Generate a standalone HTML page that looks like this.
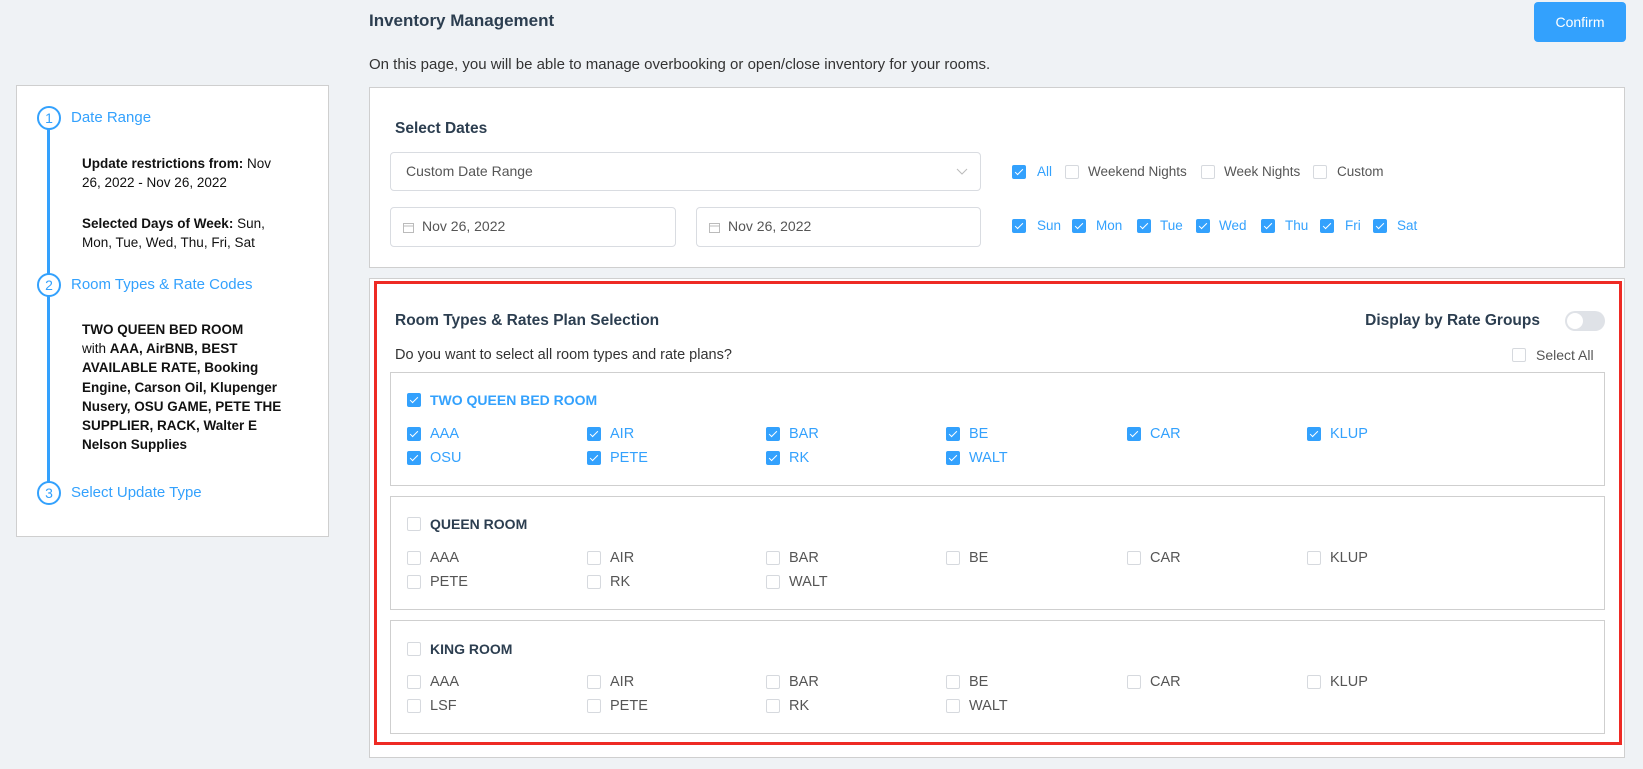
<!DOCTYPE html>
<html><head><meta charset="utf-8"><style>
*{margin:0;padding:0;box-sizing:border-box}
body{width:1643px;height:769px;background:#eff2f5;font-family:"Liberation Sans",sans-serif;position:relative;overflow:hidden;color:#333}
.a{position:absolute;white-space:nowrap;line-height:18px}
.box{position:absolute;background:#fff;border:1px solid #cfcfcf}
.cb{position:absolute;width:14px;height:14px;border:1px solid #d6d9de;border-radius:2px;background:#fff}
.cb.on{background:#33a1fd;border-color:#33a1fd}
.cb.on::after{content:"";position:absolute;left:4px;top:1px;width:3px;height:7px;border:solid #fff;border-width:0 1.5px 1.5px 0;transform:rotate(45deg)}
.bl{color:#33a1fd}
.gr{color:#555}
.inp{position:absolute;border:1px solid #d9dce1;border-radius:4px;background:#fff;font-size:14px;color:#555}
.circ{position:absolute;width:24px;height:24px;border:2px solid #33a1fd;border-radius:50%;background:#fff;color:#33a1fd;font-size:14px;text-align:center;line-height:20px}
.lp{font-size:13.5px;color:#111;line-height:19.2px}
</style></head><body>

<div class="a" style="left:369px;top:11px;font-size:17px;font-weight:bold;color:#2c3e50;line-height:20px">Inventory Management</div>
<div style="position:absolute;left:1534px;top:2px;width:92px;height:40px;background:#33a1fd;border-radius:4px;color:#fff;font-size:14px;text-align:center;line-height:40px">Confirm</div>
<div class="a" style="left:369px;top:56px;font-size:15px;color:#333">On this page, you will be able to manage overbooking or open/close inventory for your rooms.</div>

<div class="box" style="left:16px;top:85px;width:313px;height:452px"></div>
<div style="position:absolute;left:47px;top:118px;width:3px;height:375px;background:#33a1fd"></div>
<div class="circ" style="left:37px;top:106px">1</div>
<div class="circ" style="left:37px;top:273px">2</div>
<div class="circ" style="left:37px;top:481px">3</div>
<div class="a bl" style="left:71px;top:109px;font-size:15px">Date Range</div>
<div class="a bl" style="left:71px;top:276px;font-size:15px">Room Types &amp; Rate Codes</div>
<div class="a bl" style="left:71px;top:484px;font-size:15px">Select Update Type</div>
<div class="a lp" style="left:82px;top:154px;white-space:normal;width:205px"><b>Update restrictions from:</b> Nov 26, 2022 - Nov 26, 2022</div>
<div class="a lp" style="left:82px;top:214px;white-space:normal;width:205px"><b>Selected Days of Week:</b> Sun, Mon, Tue, Wed, Thu, Fri, Sat</div>
<div class="a lp" style="left:82px;top:320px;white-space:normal;width:206px"><b>TWO QUEEN BED ROOM</b><br>with <b>AAA, AirBNB, BEST AVAILABLE RATE, Booking Engine, Carson Oil, Klupenger Nusery, OSU GAME, PETE THE SUPPLIER, RACK, Walter E Nelson Supplies</b></div>

<div class="box" style="left:369px;top:87px;width:1256px;height:181px"></div>
<div class="a" style="left:395px;top:120px;font-size:15.5px;font-weight:bold;color:#2c3e50">Select Dates</div>
<div class="inp" style="left:390px;top:152px;width:591px;height:39px;padding:10px 15px">Custom Date Range
<svg style="position:absolute;right:12px;top:15px" width="12" height="8"><path d="M1 1l5 5 5-5" fill="none" stroke="#bbb" stroke-width="1"/></svg></div>
<div class="inp" style="left:390px;top:207px;width:286px;height:40px;padding:10px 0 0 31px">Nov 26, 2022
<svg style="position:absolute;left:12px;top:14px" width="11" height="11"><rect x=".5" y="1.5" width="10" height="9" fill="none" stroke="#bbb"/><line x1="0" y1="4" x2="11" y2="4" stroke="#bbb"/></svg></div>
<div class="inp" style="left:696px;top:207px;width:285px;height:40px;padding:10px 0 0 31px">Nov 26, 2022
<svg style="position:absolute;left:12px;top:14px" width="11" height="11"><rect x=".5" y="1.5" width="10" height="9" fill="none" stroke="#bbb"/><line x1="0" y1="4" x2="11" y2="4" stroke="#bbb"/></svg></div>

<div class="cb on" style="left:1012px;top:165px"></div><div class="a bl" style="left:1037px;top:163px;font-size:13.5px">All</div>
<div class="cb" style="left:1065px;top:165px"></div><div class="a gr" style="left:1088px;top:163px;font-size:13.5px">Weekend Nights</div>
<div class="cb" style="left:1201px;top:165px"></div><div class="a gr" style="left:1224px;top:163px;font-size:13.5px">Week Nights</div>
<div class="cb" style="left:1313px;top:165px"></div><div class="a gr" style="left:1337px;top:163px;font-size:13.5px">Custom</div>

<div class="cb on" style="left:1012px;top:219px"></div><div class="a bl" style="left:1037px;top:217px;font-size:13.5px">Sun</div>
<div class="cb on" style="left:1072px;top:219px"></div><div class="a bl" style="left:1096px;top:217px;font-size:13.5px">Mon</div>
<div class="cb on" style="left:1137px;top:219px"></div><div class="a bl" style="left:1160px;top:217px;font-size:13.5px">Tue</div>
<div class="cb on" style="left:1196px;top:219px"></div><div class="a bl" style="left:1219px;top:217px;font-size:13.5px">Wed</div>
<div class="cb on" style="left:1261px;top:219px"></div><div class="a bl" style="left:1285px;top:217px;font-size:13.5px">Thu</div>
<div class="cb on" style="left:1320px;top:219px"></div><div class="a bl" style="left:1345px;top:217px;font-size:13.5px">Fri</div>
<div class="cb on" style="left:1373px;top:219px"></div><div class="a bl" style="left:1397px;top:217px;font-size:13.5px">Sat</div>

<div class="box" style="left:369px;top:278px;width:1256px;height:480px"></div>
<div style="position:absolute;left:374px;top:281px;width:1248px;height:464px;border:3px solid #ee2a24"></div>
<div class="a" style="left:395px;top:312px;font-size:15.5px;font-weight:bold;color:#2c3e50">Room Types &amp; Rates Plan Selection</div>
<div class="a" style="left:395px;top:346px;font-size:14.5px;color:#333">Do you want to select all room types and rate plans?</div>
<div class="a" style="right:103px;top:312px;font-size:15.5px;font-weight:bold;color:#2c3e50">Display by Rate Groups</div>
<div style="position:absolute;left:1565px;top:311px;width:40px;height:20px;border-radius:10px;background:#dfe2e7"><div style="position:absolute;left:2px;top:2px;width:16px;height:16px;border-radius:50%;background:#fff"></div></div>
<div class="cb" style="left:1512px;top:348px"></div><div class="a gr" style="left:1536px;top:346px;font-size:14px">Select All</div>

<div class="box" style="left:390px;top:372px;width:1215px;height:114px"></div>
<div class="box" style="left:390px;top:496px;width:1215px;height:114px"></div>
<div class="box" style="left:390px;top:620px;width:1215px;height:114px"></div>

<div id="rooms"></div>
<script>
var cols=[407,587,766,946,1127,1307];
function room(hy,name,on,rows){
 var h='';
 h+='<div class="cb'+(on?' on':'')+'" style="left:407px;top:'+(hy-7)+'px"></div>';
 h+='<div class="a" style="left:430px;top:'+(hy-9)+'px;font-size:14px;font-weight:bold;color:'+(on?'#33a1fd':'#2c3e50')+'">'+name+'</div>';
 rows.forEach(function(r){r[1].forEach(function(t,i){
  h+='<div class="cb'+(on?' on':'')+'" style="left:'+cols[i]+'px;top:'+(r[0]-7)+'px"></div>';
  h+='<div class="a '+(on?'bl':'gr')+'" style="left:'+(cols[i]+23)+'px;top:'+(r[0]-9)+'px;font-size:14.5px">'+t+'</div>';
 });});
 return h;
}
document.getElementById('rooms').innerHTML=
 room(400,'TWO QUEEN BED ROOM',true,[[434,['AAA','AIR','BAR','BE','CAR','KLUP']],[458,['OSU','PETE','RK','WALT']]])+
 room(524,'QUEEN ROOM',false,[[558,['AAA','AIR','BAR','BE','CAR','KLUP']],[582,['PETE','RK','WALT']]])+
 room(649,'KING ROOM',false,[[682,['AAA','AIR','BAR','BE','CAR','KLUP']],[706,['LSF','PETE','RK','WALT']]]);
</script>
</body></html>
